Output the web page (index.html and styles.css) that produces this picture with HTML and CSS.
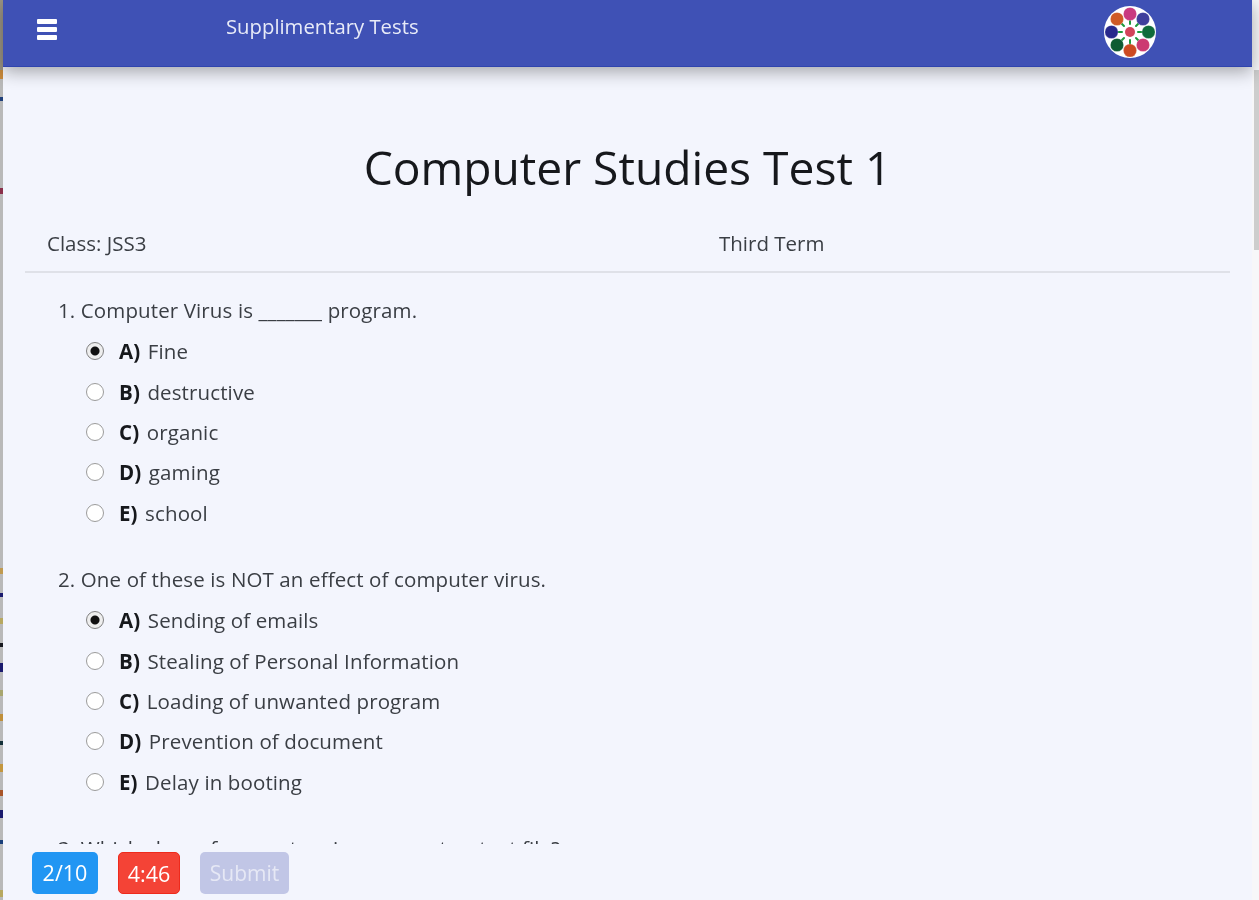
FILE: index.html
```html
<!DOCTYPE html>
<html lang="en">
<head>
<meta charset="utf-8">
<title>Supplimentary Tests</title>
<link rel="stylesheet" href="styles.css">
</head>
<body>
<div class="app">
  <div class="edge"></div>
  <div class="main">
    <header class="topbar">
      <div class="burger"><span></span><span></span><span></span></div>
      <div class="brand">Supplimentary Tests</div>
      <svg class="logo" viewBox="0 0 52 52" width="52" height="52" aria-hidden="true">
        <circle cx="26" cy="26" r="26" fill="#fff"/>
        <g stroke="#1d9a3c" stroke-width="2" stroke-linecap="round">
          <path d="M26 13V18M26 34V39M13 26H18M34 26H39M17 17L20 20M32 32L35 35M35 17L32 20M20 32L17 35"/>
        </g>
        <circle cx="26" cy="26" r="5" fill="#d2445a"/>
        <g stroke="#fff" stroke-opacity=".25">
          <circle cx="26" cy="8" r="6.6" fill="#c93a80"/>
          <circle cx="39" cy="13" r="6.6" fill="#3f3f9c"/>
          <circle cx="44.5" cy="26" r="6.6" fill="#0f6b3a"/>
          <circle cx="39" cy="39" r="6.6" fill="#cc3a72"/>
          <circle cx="26" cy="44.5" r="6.6" fill="#cc4a22"/>
          <circle cx="13" cy="39" r="6.6" fill="#0f5b32"/>
          <circle cx="7.5" cy="26" r="6.6" fill="#28288c"/>
          <circle cx="13" cy="13" r="6.6" fill="#cf5a26"/>
        </g>
      </svg>
    </header>
    <div class="content">
      <h1 class="title">Computer Studies Test 1</h1>
      <div class="meta"><div>Class: JSS3</div><div>Third Term</div></div>
      <ol class="questions">
        <li class="question">
          <p class="q-text">1. Computer Virus is _______ program.</p>
          <label class="option"><input type="radio" name="q1" checked><b>A)</b> Fine</label>
          <label class="option"><input type="radio" name="q1"><b>B)</b> destructive</label>
          <label class="option"><input type="radio" name="q1"><b>C)</b> organic</label>
          <label class="option"><input type="radio" name="q1"><b>D)</b> gaming</label>
          <label class="option"><input type="radio" name="q1"><b>E)</b> school</label>
        </li>
        <li class="question">
          <p class="q-text">2. One of these is NOT an effect of computer virus.</p>
          <label class="option"><input type="radio" name="q2" checked><b>A)</b> Sending of emails</label>
          <label class="option"><input type="radio" name="q2"><b>B)</b> Stealing of Personal Information</label>
          <label class="option"><input type="radio" name="q2"><b>C)</b> Loading of unwanted program</label>
          <label class="option"><input type="radio" name="q2"><b>D)</b> Prevention of document</label>
          <label class="option"><input type="radio" name="q2"><b>E)</b> Delay in booting</label>
        </li>
        <li class="question">
          <p class="q-text">3. Which class of computer virus corrupts a text file?</p>
        </li>
      </ol>
    </div>
    <footer class="actions">
      <button class="btn btn-count">2/10</button>
      <button class="btn btn-time">4:46</button>
      <button class="btn btn-submit" disabled>Submit</button>
    </footer>
  </div>
  <div class="scroll"><div class="thumb"></div></div>
</div>
</body>
</html>
```
FILE: styles.css
```css
* { box-sizing: border-box; }
html, body { margin: 0; height: 100%; overflow: hidden; background: #f3f5fd; }
body { font-family: "Open Sans", "Noto Sans", sans-serif; color: #3a3e44; }
.app { display: flex; width: 1259px; height: 900px; filter: blur(0.5px); }

.edge {
  width: 3px;
  flex: none;
  background: linear-gradient(to bottom,
    #9b9484 0 70px, #c98a3c 70px 79px, #b9b9b9 79px 97px, #1f3f7a 97px 101px, #b9b9b9 101px 188px,
    #8a2f4a 188px 194px, #b9b9b9 194px 568px,
    #c09a50 568px 574px, #b9b9b9 574px 593px, #1a1a6e 593px 597px, #b9b9b9 597px 618px,
    #b7a860 618px 624px, #b9b9b9 624px 643px, #16181f 643px 647px, #b9b9b9 647px 663px,
    #1a1a6e 663px 672px, #b9b9b9 672px 690px, #a8a670 690px 696px, #b9b9b9 696px 714px,
    #c08f3a 714px 721px, #b9b9b9 721px 741px, #14303a 741px 745px, #b9b9b9 745px 764px,
    #c4973f 764px 772px, #b9b9b9 772px 790px, #a8552a 790px 796px, #b9b9b9 796px 810px,
    #1a1a6e 810px 818px, #b9b9b9 818px 840px, #1a3f7a 840px 844px, #b9b9b9 844px 890px,
    #b7a860 890px 897px, #b9b9b9 897px);
}

.main { width: 1249px; flex: none; display: flex; flex-direction: column; height: 900px; }
.topbar { height: 67px; flex: none; background: #3f51b5; display: flex; align-items: center; padding-left: 34px; box-shadow: 0 5px 16px rgba(0,0,0,.32); position: relative; z-index: 2; border-bottom: 1px solid #2f44ae; }
.burger { width: 20px; display: flex; flex-direction: column; gap: 3px; margin-top: -7px; }
.burger span { display: block; height: 5px; background: #fff; border-radius: 1px; }
.brand { margin-left: 169px; margin-top: -15px; color: #e8ebf8; font-size: 20.3px; line-height: 26px; }
.logo { margin-left: 685px; margin-top: -3px; flex: none; }

.content { flex: 1; min-height: 0; overflow: hidden; padding: 0 22px; }
.title { margin: 68px 0 0; height: 66px; font-size: 46.2px; line-height: 66px; font-weight: 400; text-align: center; color: #16181c; }
.meta { display: grid; grid-template-columns: 672px 1fr; margin-top: 28px; padding: 0 0 14px 22px; border-bottom: 2px solid #dfe1e8; font-size: 20.5px; line-height: 28px; width: 1205px; }
.questions { list-style: none; margin: 0; padding: 0 0 0 33px; }
.question { margin: 0; height: 269px; padding-top: 23px; }
.q-text { margin: 0; font-size: 20.5px; letter-spacing: .12px; line-height: 28px; height: 35px; }
.option { display: flex; align-items: center; height: 40.4px; padding-left: 28px; font-size: 20.5px; letter-spacing: .12px; line-height: 28px; white-space: pre; }
.option b { color: #16181c; font-weight: 700; margin-right: 2px; }
.option input { appearance: none; -webkit-appearance: none; width: 18px; height: 18px; margin: 0 15px 0 0; border-radius: 50%; border: 1.5px solid #9a9a9a; background: #fff; flex: none; }
.option input:checked { border-color: #808080; background: radial-gradient(circle, #111 0 4px, #eee 5px); }

.actions { flex: none; height: 56px; display: flex; gap: 20px; padding: 8px 0 0 29px; background: #f3f5fd; }
.btn { height: 42px; border: 0; border-radius: 5px; font: 400 21.5px/42px "Open Sans", "Noto Sans", sans-serif; color: #fff; padding: 0; }
.btn-count { width: 66px; background: #2196f3; }
.btn-time { width: 62px; background: #f44336; border: 1px solid #ee2a1c; }
.btn-submit { width: 89px; background: #c1c6e6; color: #e6e8f5; font-size: 21px; }

.scroll { width: 7px; flex: none; background: #f7f7f9; padding-top: 70px; padding-left: 2px; }
.thumb { width: 5px; height: 180px; background: #cdcdcd; }
```
